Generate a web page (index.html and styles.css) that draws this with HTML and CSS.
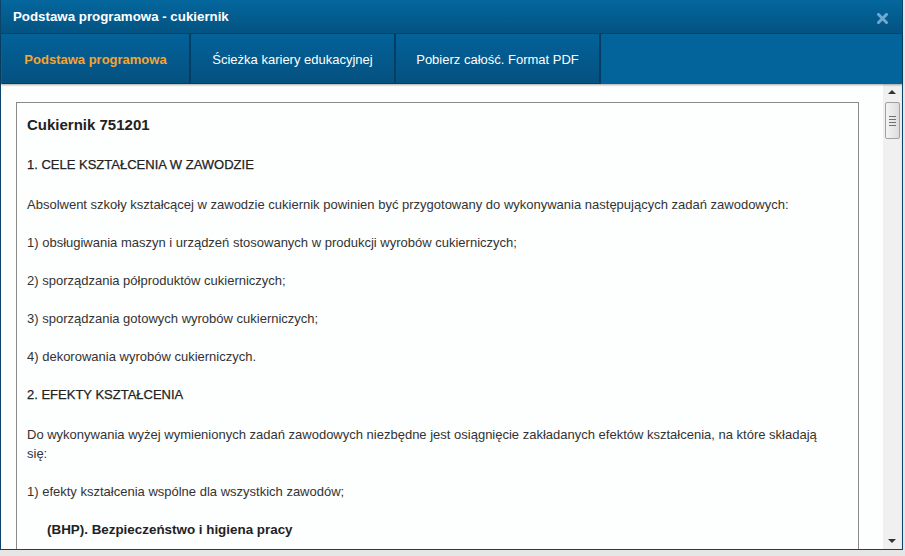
FILE: index.html
```html
<!DOCTYPE html>
<html lang="pl">
<head>
<meta charset="utf-8">
<title>Podstawa programowa - cukiernik</title>
<link rel="stylesheet" href="styles.css">
</head>
<body>
<div class="dialog">
  <div class="titlebar">
    <span class="title">Podstawa programowa - cukiernik</span>
    <svg class="close" width="11" height="11" viewBox="0 0 11 11"><path d="M1.5 1.5 L9.5 9.5 M9.5 1.5 L1.5 9.5" stroke="#6fa9d2" stroke-width="3" stroke-linecap="square"/></svg>
  </div>
  <div class="tabs">
    <div class="tab tab-active">Podstawa programowa</div>
    <div class="tab tab-2">Ścieżka kariery edukacyjnej</div>
    <div class="tab tab-3">Pobierz całość. Format PDF</div>
  </div>
  <div class="body">
    <div class="content">
      <div class="box">
        <h1 class="doc-title">Cukiernik 751201</h1>
        <h2 class="section">1. CELE KSZTAŁCENIA W ZAWODZIE</h2>
        <p>Absolwent szkoły kształcącej w zawodzie cukiernik powinien być przygotowany do wykonywania następujących zadań zawodowych:</p>
        <p>1) obsługiwania maszyn i urządzeń stosowanych w produkcji wyrobów cukierniczych;</p>
        <p>2) sporządzania półproduktów cukierniczych;</p>
        <p>3) sporządzania gotowych wyrobów cukierniczych;</p>
        <p>4) dekorowania wyrobów cukierniczych.</p>
        <h2 class="section">2. EFEKTY KSZTAŁCENIA</h2>
        <p>Do wykonywania wyżej wymienionych zadań zawodowych niezbędne jest osiągnięcie zakładanych efektów kształcenia, na które składają się:</p>
        <p>1) efekty kształcenia wspólne dla wszystkich zawodów;</p>
        <p class="sub">(BHP). Bezpieczeństwo i higiena pracy</p>
      </div>
    </div>
    <div class="scrollbar">
      <div class="arrow arrow-up"></div>
      <div class="thumb"><span></span><span></span><span></span><span></span></div>
      <div class="track"></div>
      <div class="arrow arrow-down"></div>
    </div>
  </div>
</div>
</body>
</html>
```
FILE: styles.css
```css
html, body {
  margin: 0;
  padding: 0;
}
body {
  width: 905px;
  height: 556px;
  background: #e6e6e6;
  font-family: "Liberation Sans", Arial, sans-serif;
  overflow: hidden;
}
.dialog {
  width: 901px;
  height: 549px;
  border: 1px solid #0b4468;
  border-top: 0;
  display: flex;
  flex-direction: column;
  background: #fff;
}
.titlebar {
  height: 33px;
  flex: none;
  display: flex;
  align-items: center;
  justify-content: space-between;
  padding: 0 14px 0 12px;
  background: linear-gradient(#04679e, #035381);
  border-bottom: 1px solid #05456d;
}
.title {
  color: #fff;
  font-weight: bold;
  font-size: 13.3px;
  margin-top: -1px;
}
.close {
  display: block;
  margin-top: 3px;
}
.tabs {
  height: 50px;
  flex: none;
  display: flex;
  background: #02649a;
  padding-left: 1px;
  box-shadow: 0 1px 2px rgba(0,0,0,0.35);
  position: relative;
  z-index: 1;
}
.tab {
  display: flex;
  align-items: center;
  justify-content: center;
  color: #fff;
  font-size: 13px;
  background: linear-gradient(#03629a, #04517f);
  border-right: 2px solid #043e63;
  border-bottom: 1px solid #043e63;
  padding-top: 1px;
}
.tab-active {
  width: 187px;
  color: #f6a532;
  font-weight: bold;
}
.tab-2 { width: 203px; }
.tab-3 { width: 203px; }
.body {
  flex: 1;
  display: flex;
  min-height: 0;
}
.content {
  flex: 1;
  padding: 18px 24px 0 15px;
  overflow: hidden;
  background: #fdfefe;
}
.box {
  border: 1px solid #8a8a8a;
  border-bottom: 0;
  padding: 12px 22px 0 10px;
  height: 100%;
  box-sizing: border-box;
  color: #333;
  font-size: 13px;
  line-height: 19px;
}
.doc-title {
  font-size: 15px;
  font-weight: bold;
  line-height: 19px;
  margin: 0 0 21px;
  color: #222;
}
.section {
  font-size: 13px;
  font-weight: normal;
  line-height: 19px;
  margin: 0 0 21px;
  color: #222;
  -webkit-text-stroke: 0.25px #222;
}
.box p {
  margin: 0 0 19px;
}
.box p.sub {
  font-weight: bold;
  font-size: 13.4px;
  margin-left: 20px;
  color: #222;
}
.scrollbar {
  width: 18px;
  flex: none;
  background: #f0f0f0;
  display: flex;
  flex-direction: column;
  align-items: center;
  border-right: 1px solid #e8e8e8;
}
.arrow {
  width: 18px;
  height: 17px;
  flex: none;
  position: relative;
}
.arrow::after {
  content: "";
  position: absolute;
  left: 5px;
  width: 0;
  height: 0;
  border-left: 4px solid transparent;
  border-right: 4px solid transparent;
}
.arrow-up::after {
  top: 6px;
  border-bottom: 4px solid #333;
}
.arrow-down::after {
  top: 7px;
  border-top: 4px solid #333;
}
.thumb {
  width: 13px;
  height: 35px;
  flex: none;
  margin-top: 1px;
  border: 1px solid #a0a0a0;
  border-radius: 2px;
  background: linear-gradient(90deg, #f4f4f4, #dcdcdc);
  display: flex;
  flex-direction: column;
  align-items: center;
  justify-content: center;
  gap: 2px;
}
.thumb span {
  display: block;
  width: 7px;
  height: 1px;
  background: #707070;
}
.track {
  flex: 1;
}
```
